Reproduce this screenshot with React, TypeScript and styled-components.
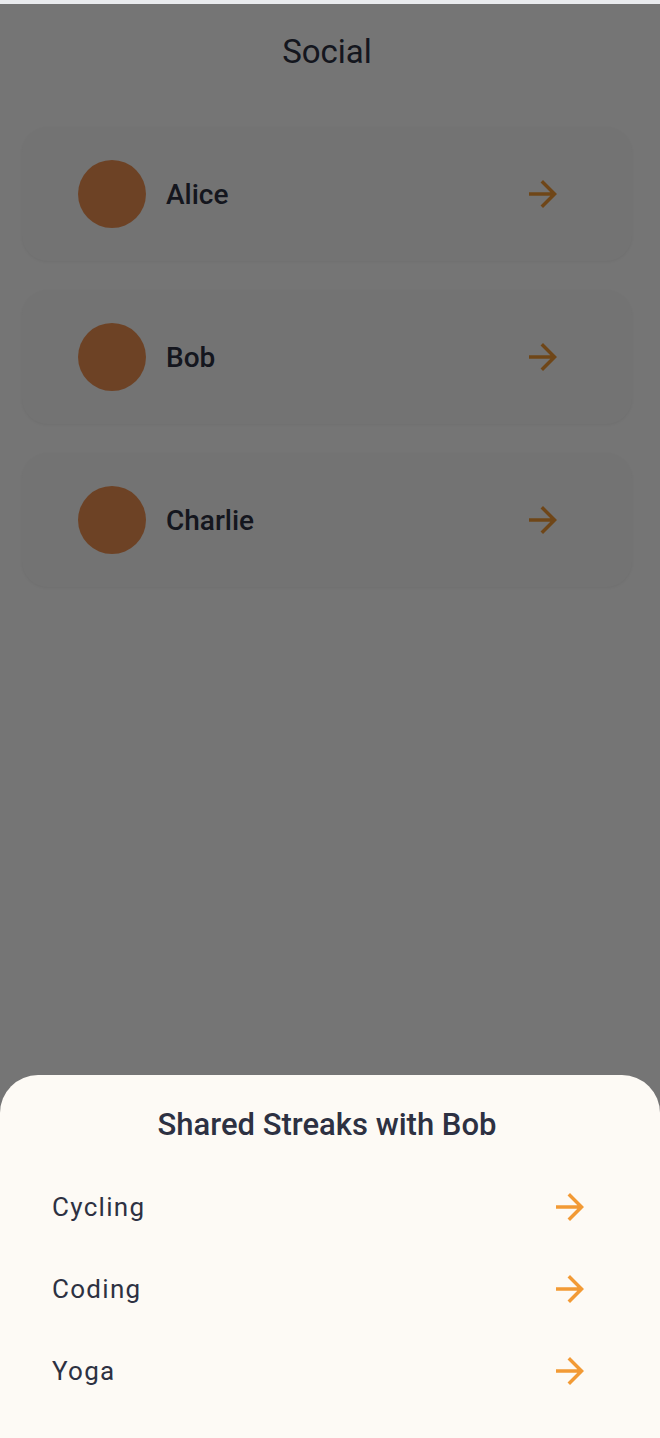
import React from "react";
import styled, { createGlobalStyle } from "styled-components";

const GlobalStyle = createGlobalStyle`
  html, body { margin: 0; padding: 0; }
  body { font-family: Roboto, "Noto Sans", sans-serif; background: #ffffff; }
  * { box-sizing: border-box; }
`;

const TEXT = "#2d3142";
const ACCENT = "#f29a35";

const Frame = styled.div`
  position: relative;
  width: 660px;
  height: 1438px;
  overflow: hidden;
  background: #fefefe;
`;

const StatusStrip = styled.div`
  height: 4px;
  background: #e9ebee;
`;

const Header = styled.header`
  height: 96px;
  padding-right: 6px;
  display: flex;
  align-items: center;
  justify-content: center;
`;

const Title = styled.h1`
  margin: 0;
  font-size: 33px;
  font-weight: 400;
  color: ${TEXT};
  line-height: 40px;
`;

const FriendList = styled.div`
  margin-top: 27px;
  padding: 0 28px 0 22px;
  display: flex;
  flex-direction: column;
  gap: 29px;
`;

const FriendCard = styled.div`
  height: 134px;
  border-radius: 26px;
  background: #fafafa;
  box-shadow: 0 1px 3px rgba(0, 0, 0, 0.05);
  display: flex;
  align-items: center;
  padding: 0 68px 0 56px;
  gap: 20px;
`;

const Avatar = styled.div`
  width: 68px;
  height: 68px;
  border-radius: 50%;
  background: #ee9152;
  flex-shrink: 0;
`;

const FriendName = styled.span`
  flex: 1;
  font-size: 28px;
  font-weight: 500;
  color: ${TEXT};
`;

const Scrim = styled.div`
  position: absolute;
  top: 4px;
  left: 0;
  right: 0;
  bottom: 0;
  background: rgba(0, 0, 0, 0.54);
`;

const Sheet = styled.div`
  position: absolute;
  left: 0;
  right: 0;
  bottom: 0;
  height: 363px;
  background: #fdfaf5;
  border-radius: 38px 38px 0 0;
  padding-top: 30px;
  display: flex;
  flex-direction: column;
`;

const SheetTitle = styled.h2`
  margin: 0 0 21px;
  padding-right: 6px;
  text-align: center;
  font-size: 31px;
  font-weight: 500;
  line-height: 40px;
  color: ${TEXT};
`;

const StreakRow = styled.div`
  height: 82px;
  display: flex;
  align-items: center;
  padding: 0 69px 0 52px;
`;

const StreakName = styled.span`
  flex: 1;
  font-size: 26px;
  letter-spacing: 1.3px;
  color: ${TEXT};
`;

const ArrowIcon = ({ color }: { color: string }) => (
  <svg width="42" height="42" viewBox="0 0 24 24" style={{ display: "block", flexShrink: 0 }}>
    <path
      fill={color}
      d="M12 4l-1.41 1.41L16.17 11H4v2h12.17l-5.58 5.59L12 20l8-8z"
    />
  </svg>
);

const friends = ["Alice", "Bob", "Charlie"];
const streaks = ["Cycling", "Coding", "Yoga"];

export default function App() {
  return (
    <Frame>
      <GlobalStyle />
      <StatusStrip />
      <Header>
        <Title>Social</Title>
      </Header>
      <FriendList>
        {friends.map((f) => (
          <FriendCard key={f}>
            <Avatar />
            <FriendName>{f}</FriendName>
            <ArrowIcon color={ACCENT} />
          </FriendCard>
        ))}
      </FriendList>
      <Scrim />
      <Sheet>
        <SheetTitle>Shared Streaks with Bob</SheetTitle>
        {streaks.map((s) => (
          <StreakRow key={s}>
            <StreakName>{s}</StreakName>
            <ArrowIcon color={ACCENT} />
          </StreakRow>
        ))}
      </Sheet>
    </Frame>
  );
}
